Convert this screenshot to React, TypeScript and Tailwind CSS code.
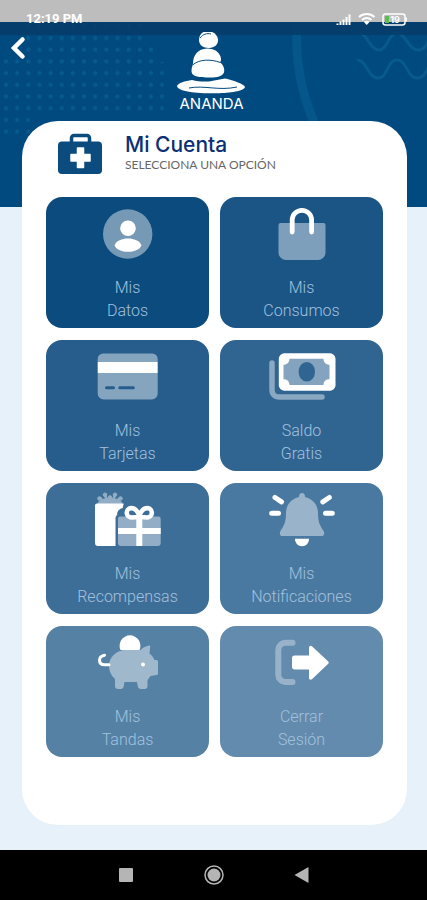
import type { ReactNode } from "react";
import clsx from "clsx";

type Option = {
  lines: [string, string];
  color: string;
  icon: ReactNode;
};

const SOFT = "#ffffff70";

const OPTIONS: Option[] = [
  {
    lines: ["Mis", "Datos"],
    color: "bg-[#0c4b7d]",
    icon: (
      <>
        <circle cx="35.7" cy="31" r="24.7" fill={SOFT} />
        <circle cx="36" cy="25.3" r="7.8" fill="#fff" />
        <path d="M22.500 42.500c2-5 7.500-7 13.500-7s11.500 2 13.500 7c-2 4.700-8 6.200-13.500 6.200S24.500 47.200 22.500 42.500z" fill="#fff" />
      </>
    ),
  },
  {
    lines: ["Mis", "Consumos"],
    color: "bg-[#1a5586]",
    icon: (
      <>
        <path d="M14.500 20h43a2 2 0 0 1 2 2v27.500a7.500 7.500 0 0 1-7.500 7.500H20a7.500 7.500 0 0 1-7.500-7.500V22a2 2 0 0 1 2-2z" fill={SOFT} />
        <path d="M26.200 29V17a9.700 9.700 0 0 1 19.400 0v12" stroke="#fff" strokeWidth="4.800" strokeLinecap="round" />
      </>
    ),
  },
  {
    lines: ["Mis", "Tarjetas"],
    color: "bg-[#265d8c]",
    icon: (
      <>
        <path d="M5.700 16v-3a5.500 5.500 0 0 1 5.500-5.500h49a5.500 5.500 0 0 1 5.500 5.500v3zM5.700 27h60v20.500a6 6 0 0 1-6 6h-48a6 6 0 0 1-6-6z" fill={SOFT} />
        <path d="M5.700 16h60v11h-60z" fill="#fff" />
        <path d="M14.500 41.700h7M27.800 41.700h13.500" stroke="#265d8c" strokeWidth="3" strokeLinecap="round" />
      </>
    ),
  },
  {
    lines: ["Saldo", "Gratis"],
    color: "bg-[#306592]",
    icon: (
      <>
        <path d="M6 17v27.500a6.500 6.500 0 0 0 6.500 6.500h43.500" stroke={SOFT} strokeWidth="5.500" strokeLinecap="round" />
        <rect x="12.800" y="7.300" width="56.700" height="37.400" rx="5.500" fill="#fff" />
        <path d="M23.500 12.800h34c0 3.700 2.500 6 6 6v14.500c-3.500 0-6 2-6 5.700h-34c0-3.700-2.500-5.700-6-5.700V18.800c3.500 0 6-2.300 6-6z" fill="#83a3be" />
        <ellipse cx="40.800" cy="25.800" rx="8.200" ry="9.800" fill="#306592" />
      </>
    ),
  },
  {
    lines: ["Mis", "Recompensas"],
    color: "bg-[#3d6e98]",
    icon: (
      <>
        <g fill="#fff" stroke="#fff" opacity=".44">
          <path d="M6 14.500c1-3.500 5-5 12-5s11 1.500 12 5z" />
          <path d="m11 12-3-3M15 11l-2-5M21 11l2-5M25 12l3-3M18 11V9" strokeWidth="2.500" />
          <circle cx="7.500" cy="9.500" r="1.800" />
          <circle cx="13" cy="5.800" r="1.800" />
          <circle cx="23" cy="5.800" r="1.800" />
          <circle cx="28.500" cy="9.500" r="1.800" />
          <circle cx="18" cy="8.500" r="1.800" />
        </g>
        <path d="M5 14.500h26.700l-1 4.500c-4 1-6 3.500-5.500 7-1.500 1-1.700 2.500-1.700 4V57H6a3 3 0 0 1-3-3V16.500a2 2 0 0 1 2-2z" fill="#fff" />
        <path d="M28 27.500h38.500a2.200 2.200 0 0 1 2.200 2.200V54a3 3 0 0 1-3 3H29a3 3 0 0 1-3-3V29.500a2 2 0 0 1 2-2z" fill={SOFT} />
        <path d="M26 42h42.700M47.300 28v29" stroke="#fff" strokeWidth="6" />
        <path d="M47.300 27.500c-1.500-6-5-8.500-8.500-8.500a4.800 4.800 0 0 0 0 9.500c3.500 0 6.500-.5 8.500-1zM47.300 27.500c1.500-6 5-8.500 8.500-8.500a4.800 4.800 0 0 1 0 9.500c-3.500 0-6.500-.5-8.500-1z" fill="#3d6e98" stroke="#fff" strokeWidth="4.500" strokeLinejoin="round" />
      </>
    ),
  },
  {
    lines: ["Mis", "Notificaciones"],
    color: "bg-[#4979a0]",
    icon: (
      <>
        <path d="M36 4c2 0 3 1.500 3 4 7.500 1.500 13 8 13 16 0 8 1.500 12 5 17 2 3 1.500 6-1.500 6h-39c-3 0-3.500-3-1.500-6 3.500-5 5-9 5-17 0-8 5.500-14.500 13-16 0-2.500 1-4 3-4z" fill={SOFT} />
        <path d="M29 49.800h14c0 4.500-3 7.500-7 7.500s-7-3-7-7.500z" fill="#fff" />
        <path d="m9 8.500 6.500 4.300M56.800 12.800l6.500-4.300M5.700 24.200h6.800M59.500 24.200h6.800" stroke="#fff" strokeWidth="5" strokeLinecap="round" />
      </>
    ),
  },
  {
    lines: ["Mis", "Tandas"],
    color: "bg-[#5581a5]",
    icon: (
      <>
        <path d="M28.500 18a10.400 10.400 0 1 1 19 0z" fill="#fff" />
        <path d="M34 18h14.500c2-2.500 5-3.500 8.500-4.500.8-.2 1.300.3 1.200 1l-.7 7c2.500 2 4 4 5 6.500h2a1.500 1.500 0 0 1 1.500 1.500v12a1.500 1.500 0 0 1-1.200 1.500l-6.300 1c-1.300 1.700-2 3-3 4v6a3 3 0 0 1-3 3h-3.500c-2 0-3-1-3.300-3l-.7-4H32.500l-.7 4c-.3 2-1.300 3-3.300 3H26c-2 0-3-1-3-3v-7c-4-3.500-6-8-6-13 0-9 7.500-16 17-16z" fill={SOFT} />
        <circle cx="51" cy="32.500" r="2" fill="#fff" />
        <path d="M17 32.700h-4.500c-3.500 0-5-2-5-4.500s1.500-4.200 5-5" stroke="#fff" strokeWidth="3" strokeLinecap="round" />
      </>
    ),
  },
  {
    lines: ["Cerrar", "Sesión"],
    color: "bg-[#628bad]",
    icon: (
      <>
        <path d="M26.500 10.700h-7a7.200 7.200 0 0 0-7.200 7.200v25a7.200 7.200 0 0 0 7.200 7.200h7" stroke="#ffffff58" strokeWidth="6" strokeLinecap="round" />
        <path d="M28.500 23.500H43v-7.500c0-2 1.700-2.800 3.200-1.500L62 29.300c1 .9 1 1.800 0 2.700L46.200 47c-1.500 1.300-3.200.7-3.200-1.300V37.500H28.500c-1.500 0-2.500-1-2.500-2.500v-9c0-1.500 1-2.500 2.500-2.500z" fill="#fff" />
      </>
    ),
  },
];

// Blue band with dots, arc and waves behind the top of the screen
function Backdrop() {
  return (
    <div className="absolute inset-x-0 top-0 h-[207px] bg-[#014a80]">
      <svg className="h-full w-full" viewBox="0 0 427 207" preserveAspectRatio="xMidYMin slice" fill="none" aria-hidden="true">
        <defs>
          <pattern id="dots" x="0.500" y="32.500" width="11.150" height="11.700" patternUnits="userSpaceOnUse">
            <circle cx="5.500" cy="5.500" r="2" fill="#0a6795" />
          </pattern>
        </defs>
        <path d="M22 24h120v22h14v16h10v50H30v26H0V58h22z" fill="url(#dots)" opacity=".6" />
        <path d="M297 22c-2 34 3 68 17 100" stroke="#05568a" strokeWidth="9" />
        <g stroke="#075a8b" strokeWidth="3" strokeLinecap="round">
          <path d="M360 33c8 2 10 17 19 17s9-17 18-17 11 17 21 17 9-12 15-15" />
          <path d="M358 60c9 1 10 18 20 18s9-18 19-18 10 18 20 18 9-12 15-15" />
        </g>
        <path d="M0 22h427v13H0z" fill="#053d6a" opacity=".9" />
      </svg>
      <div className="absolute inset-x-0 top-0 h-[22px] bg-[#bdbdbd]" />
    </div>
  );
}

function StatusBar() {
  return (
    <div className="relative flex h-7 items-end justify-between pr-5 pb-px pl-[26px] text-white">
      <span className="font-[Roboto,sans-serif] text-[13px] leading-4 font-bold">12:19 PM</span>
      <svg className="h-4 w-[72px]" viewBox="0 0 72 16" fill="none" aria-hidden="true">
        <path d="M1.500 14v-1.500M4.500 14v-3.500M7.500 14V8.500M10.500 14V6M13.500 14V3.500" transform="translate(1)" stroke="#fff" strokeWidth="2" />
        <path d="M24 6c4.500-4 11-4 15.500 0M27 9c3-2.500 6.500-2.500 9.500 0" stroke="#fff" strokeWidth="2" />
        <path d="m28.700 10.800 3 3.200 3-3.200c-2-1.500-4-1.500-6 0z" fill="#fff" />
        <rect x="48" y="3" width="22" height="11" rx="2.500" stroke="#fff" strokeWidth="1.500" />
        <path d="M71.200 6.500v4" stroke="#fff" strokeWidth="1.500" />
        <path d="M50 5h4v7h-4z" fill="#5cbf4a" />
        <text x="60" y="12" fill="#fff" fontSize="9" fontWeight="700" textAnchor="middle">19</text>
      </svg>
    </div>
  );
}

function Header() {
  return (
    <header className="relative grid h-[93px] grid-cols-[1fr_auto_1fr] items-start pr-3 pl-2">
      <button type="button" aria-label="Atrás" className="mt-2 flex w-5 justify-center">
        <svg className="h-6 w-5" viewBox="0 0 20 24" fill="none">
          <path d="M14.500 3.500 6 12l8.500 8.500" stroke="#fff" strokeWidth="4.500" strokeLinecap="round" />
        </svg>
      </button>
      <div className="flex flex-col items-center">
        <svg className="mt-1 h-[66px] w-[72px]" viewBox="174 32 72 66" aria-hidden="true">
          <path d="M197 40c0-5 3-9 9-9 6 .5 9 4 10 8 .6 5-3 9-9 9-6 0-10-3-10-8z" fill="#fff" />
          <path d="M191 64c0-9 5-15 14-15.500 8 0 13 4 14 10 .3 2-1 4-1 4 3 2 5 6 4 10-2 4.500-9 5.500-17 5-9-.3-15-1-15.500-6 0-3 .5-5 1.500-7.500z" fill="#fff" />
          <path d="M175 86c1-3 8-5 15-6 5 1.500 11 1.700 17 1.500l16-3c9 2 19 5.500 20 8.500-1 4-15 6-28 6.300C196 93.500 176 92 175 86z" fill="#fff" />
          <path d="M198 38c3-4 7-5 11-4M190.500 65c7-6 18-6 28-2.500M187 88c15-3 30 3 48-1" fill="none" stroke="#014a80" strokeWidth="1" />
        </svg>
        <span className="text-[15px] leading-3 text-white">ANANDA</span>
      </div>
    </header>
  );
}

function MedkitIcon() {
  return (
    <svg className="h-[42px] w-11" viewBox="0 0 44 42" fill="none" aria-hidden="true">
      <path d="M13.500 10V5a2.500 2.500 0 0 1 2.500-2.500h13A2.500 2.500 0 0 1 31.500 5v5" stroke="#0c4b7d" strokeWidth="3.500" />
      <rect y="8.500" width="44" height="32.500" rx="4" fill="#0c4b7d" />
      <path d="M19.500 15h6v6.500H32v6.500h-6.500v6.500h-6V28H13v-6.500h6.500z" fill="#fff" stroke="#fff" strokeWidth="1.500" strokeLinejoin="round" />
    </svg>
  );
}

function OptionTile({ lines, color, icon }: Option) {
  return (
    <button
      type="button"
      className={clsx("flex flex-col items-center gap-[13px] rounded-2xl py-1.5", color)}
    >
      <svg className="h-[60px] w-[72px]" viewBox="0 0 72 60" fill="none" aria-hidden="true">
        {icon}
      </svg>
      <span className="font-[Roboto,sans-serif] text-base leading-[23px] font-light text-[#a3c1de]">
        {lines[0]}
        <br />
        {lines[1]}
      </span>
    </button>
  );
}

function NavBar() {
  return (
    <nav className="flex h-[50px] items-center justify-center bg-black text-[#b5b5b5]">
      <button type="button" aria-label="Recientes" className="flex w-[88px] justify-center">
        <svg className="size-5" viewBox="0 0 20 20" fill="currentColor">
          <rect x="3" y="3" width="14" height="14" rx="1" />
        </svg>
      </button>
      <button type="button" aria-label="Inicio" className="flex w-[88px] justify-center">
        <svg className="size-5" viewBox="0 0 20 20" fill="currentColor">
          <circle cx="10" cy="10" r="9" fill="none" stroke="currentColor" strokeWidth="1.500" />
          <circle cx="10" cy="10" r="6.500" />
        </svg>
      </button>
      <button type="button" aria-label="Volver" className="flex w-[88px] justify-center">
        <svg className="size-5" viewBox="0 0 20 20" fill="currentColor">
          <path d="M2.500 10 16.500 2v16z" />
        </svg>
      </button>
    </nav>
  );
}

export default function App() {
  return (
    <div className="relative flex min-h-screen flex-col bg-[#e6f1fa] font-[Inter,sans-serif]">
      <Backdrop />
      <StatusBar />
      <Header />
      <main className="relative mr-5 mb-[25px] ml-[22px] flex-1 rounded-[36px] bg-white px-6 pt-3 pb-[68px]">
        <div className="flex h-16 gap-[23px] pl-3">
          <MedkitIcon />
          <div>
            <h1 className="text-[21px] leading-6 font-medium text-[#0b2f74]">Mi Cuenta</h1>
            <p className="font-[Lato,sans-serif] text-xs leading-4 text-[#666]">SELECCIONA UNA OPCIÓN</p>
          </div>
        </div>
        <div className="grid grid-cols-2 gap-x-[11px] gap-y-3">
          {OPTIONS.map((option) => (
            <OptionTile key={option.lines.join(" ")} {...option} />
          ))}
        </div>
      </main>
      <NavBar />
    </div>
  );
}
